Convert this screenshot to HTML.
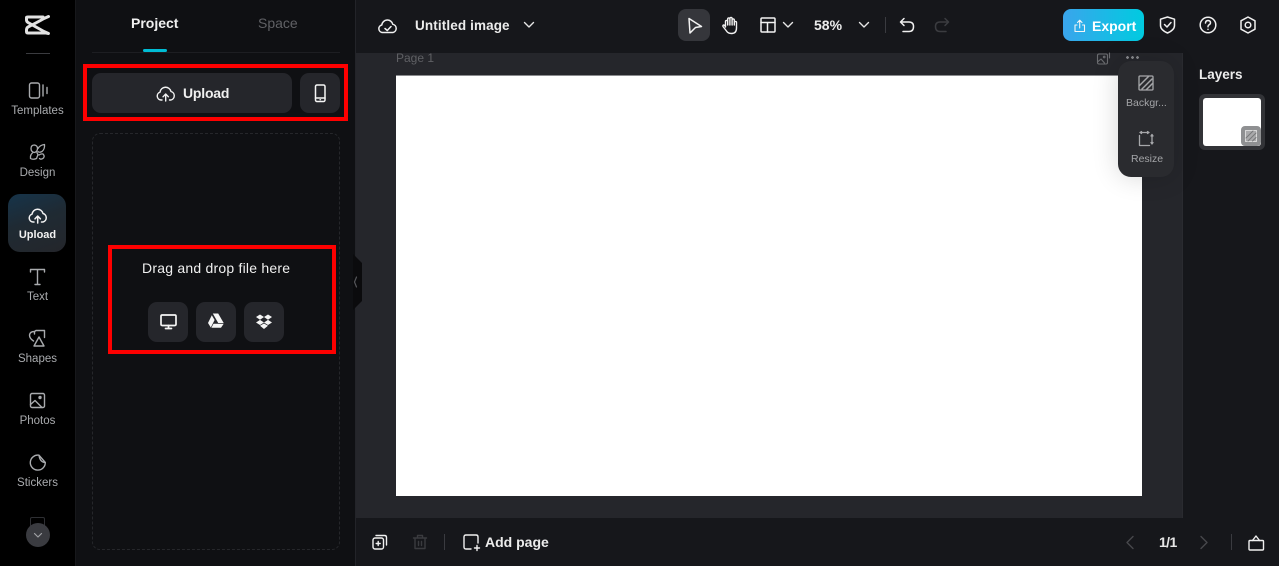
<!DOCTYPE html>
<html lang="en">
<head>
<meta charset="utf-8">
<title>Untitled image</title>
<style>
*{box-sizing:border-box;margin:0;padding:0}
html,body{width:1279px;height:566px;overflow:hidden;background:#0f1013;font-family:"Liberation Sans",sans-serif}
.a{position:absolute}
.t{position:absolute;white-space:nowrap;line-height:16px}
svg{position:absolute;overflow:visible;fill:none;stroke-linecap:round;stroke-linejoin:round}
.nav{position:absolute;left:0;width:75px;text-align:center;font-size:11.5px;line-height:14px;color:#a9abae;white-space:nowrap}
.b{background:#25262b;border-radius:9px;position:absolute}
</style>
</head>
<body>
<!-- backgrounds -->
<div class="a" style="left:0;top:0;width:75px;height:566px;background:#000"></div>
<div class="a" style="left:75px;top:0;width:281px;height:566px;background:#0f1013;border-left:1px solid #17181b;border-right:1px solid #232429"></div>
<div class="a" style="left:356px;top:0;width:923px;height:53px;background:#16171b"></div>
<div class="a" style="left:356px;top:53px;width:827px;height:465px;background:#25262b"></div>
<div class="a" style="left:1182px;top:53px;width:97px;height:465px;background:#16171b;border-left:1px solid #2a2b30"></div>
<div class="a" style="left:356px;top:518px;width:923px;height:48px;background:#16171b"></div>

<!-- rail -->
<svg style="left:24px;top:14px" width="27" height="22" viewBox="0 0 27 22" stroke="#e2e2e2" stroke-width="3"><path d="M24.500 2.500L20 4.500Q13 8.500 4 13Q2.500 14 2.500 16V17.500Q2.500 19 4 19H22L24.500 19.500L20 17.500Q12 13 4 8.500Q2.500 7.500 2.500 6V3.500Q2.500 3 4 3H19"/></svg>
<div class="a" style="left:26px;top:53px;width:24px;height:1px;background:#3a3b3f"></div>

<svg style="left:28px;top:81px" width="20" height="18" stroke="#a9abae" stroke-width="1.400"><rect x="1.500" y="2" width="10" height="15" rx="2"/><path d="M15 4V15M19 6.500V12.500"/></svg>
<div class="nav" style="top:104px">Templates</div>
<svg style="left:28px;top:143px" width="20" height="18" stroke="#a9abae" stroke-width="1.300"><path d="M3 5.500Q3 2 6.500 2Q9.500 2.500 9.500 5.500Q9.500 8.500 6.500 9.500Q3 9 3 5.500ZM10 5.500Q12 2 16.500 1.500Q17 6 14 8.500Q11 10 10 8.500M9 9.500Q9 10.500 10 11.500L8.500 15.500Q5 17 2.500 15.500Q2 11.500 5 9.500M11 12Q13 10.500 15 11Q17 13 15.500 15Q13 17 11.500 15.500"/></svg>
<div class="nav" style="top:166px">Design</div>

<div class="a" style="left:8px;top:194px;width:58px;height:58px;border-radius:12px;background:linear-gradient(160deg,#16344a 0%,#1f2a33 45%,#24262b 100%)"></div>
<svg style="left:28px;top:206px" width="20" height="18" stroke="#f2f2f2" stroke-width="1.500"><path d="M6 16H5A4 4 0 0 1 4 8.200A5.600 5.600 0 0 1 15 7.500A4.400 4.400 0 0 1 15 16H13.500M9.700 17V10.500M7 12.800L9.700 10L12.400 12.800"/></svg>
<div class="nav" style="top:228px;color:#f2f2f2;font-weight:bold;font-size:11px">Upload</div>

<svg style="left:29px;top:268px" width="18" height="18" stroke="#a9abae" stroke-width="1.400"><path d="M1.500 4V1.500H15.500V4M8.500 1.500V16.500M6 16.500H11"/></svg>
<div class="nav" style="top:290px">Text</div>
<svg style="left:28px;top:329px" width="20" height="19" stroke="#a9abae" stroke-width="1.400"><path d="M5.500 12Q1.500 9.500 1.500 6Q2 2.500 6.500 2.500L8 1.500H16.500V8.500M6.500 2.500V5M11 8L6 17H16Z"/></svg>
<div class="nav" style="top:352px">Shapes</div>
<svg style="left:29px;top:392px" width="18" height="18" stroke="#a9abae" stroke-width="1.400"><rect x="1.500" y="1.500" width="14" height="14" rx="1.500"/><path d="M1.500 12.500L6 8.500L13 15.500"/><circle cx="11" cy="5.500" r="1" fill="#a9abae"/></svg>
<div class="nav" style="top:414px">Photos</div>
<svg style="left:28px;top:453px" width="20" height="18" stroke="#a9abae" stroke-width="1.400"><path d="M11 2.200A7.500 7.500 0 1 0 17.300 9.500Q12 9.500 11 2.200ZM11 2.200L17.300 9.500"/></svg>
<div class="nav" style="top:476px">Stickers</div>
<div class="a" style="left:30px;top:517px;width:15px;height:12px;border:1.500px solid #2e2f33;border-radius:2px"></div>
<div class="a" style="left:26px;top:523px;width:24px;height:24px;border-radius:50%;background:#3a3b40"></div>
<svg style="left:26px;top:523px" width="24" height="24" stroke="#a0a1a4" stroke-width="1.200"><path d="M8.500 10.500L12 14L15.500 10.500"/></svg>

<!-- panel -->
<div class="t" style="left:131px;top:15px;font-size:14px;font-weight:bold;color:#f0f0f0">Project</div>
<div class="t" style="left:258px;top:15px;font-size:14px;color:#606165">Space</div>
<div class="a" style="left:92px;top:52px;width:248px;height:1px;background:#1d1e22"></div>
<div class="a" style="left:143px;top:49px;width:24px;height:3px;background:#00bcd4;border-radius:2px"></div>

<div class="a" style="left:83px;top:64px;width:265px;height:57px;border:4px solid #fe0000"></div>
<div class="b" style="left:92px;top:73px;width:200px;height:40px"></div>
<div class="b" style="left:300px;top:73px;width:40px;height:40px"></div>
<svg style="left:156px;top:84px" width="20" height="18" stroke="#f2f2f2" stroke-width="1.400"><path d="M6 16H5A4 4 0 0 1 4 8.200A5.600 5.600 0 0 1 15 7.500A4.400 4.400 0 0 1 15 16H13.500M9.700 17V10.500M7 12.800L9.700 10L12.400 12.800"/></svg>
<div class="t" style="left:183px;top:85px;font-size:14px;font-weight:bold;color:#f0f0f0;letter-spacing:-.2px">Upload</div>
<svg style="left:314px;top:84px" width="13" height="18" stroke="#f5f5f5" stroke-width="1.500"><rect x="1.500" y="1" width="9.500" height="16.500" rx="1.500"/><path d="M1.500 14H11" /><path d="M6 15.700H6.500" stroke-width="1.200"/></svg>

<div class="a" style="left:92px;top:133px;width:248px;height:417px;border:1px dashed #26272b;border-radius:8px"></div>

<div class="a" style="left:108px;top:245px;width:228px;height:109px;border:4px solid #fe0000"></div>
<div class="t" style="left:142px;top:260px;font-size:14px;color:#f0f0f0;letter-spacing:.22px">Drag and drop file here</div>
<div class="b" style="left:148px;top:302px;width:40px;height:40px"></div>
<div class="b" style="left:196px;top:302px;width:40px;height:40px"></div>
<div class="b" style="left:244px;top:302px;width:40px;height:40px"></div>
<svg style="left:160px;top:314px" width="17" height="16" stroke="#f5f5f5" stroke-width="1.700"><rect x="1" y="1" width="15" height="10.500" rx="1.200"/><path d="M5.500 14.500H11.500M8.500 11.500V14.500"/></svg>
<svg style="left:207px;top:313px" width="18" height="16"><path fill="#f5f5f5" d="M5.800 .5H11.200L16.700 10H11.200ZM4.800 2.200L7.600 7L3.800 14.500L1 10ZM6.500 10.800H16.700L14 14.800H4.400Z"/></svg>
<svg style="left:255px;top:314px" width="18" height="16"><path fill="#f5f5f5" d="M5 .5L9 3L5 5.700L1 3ZM13 .5L17 3L13 5.700L9 3ZM5 5.900L9 8.500L5 11L1 8.500ZM13 5.900L17 8.500L13 11L9 8.500ZM5 11.800L9 9.500L13 11.800L9 15Z"/></svg>

<svg style="left:349px;top:254px" width="14" height="56"><path fill="#0b0b0d" d="M4 0L13 9V47L4 56Z"/><path d="M7.500 23L5.500 28L7.500 33" stroke="#55565a" stroke-width="1.200"/></svg>

<!-- top bar -->
<svg style="left:378px;top:17px" width="20" height="17" stroke="#f0f0f0" stroke-width="1.500"><path d="M5 15.500H4.500A3.800 3.800 0 0 1 3.800 8A5.600 5.600 0 0 1 14.800 7.300A4.200 4.200 0 0 1 15 15.500ZM7 11.500L9.300 13.500L13 9.500"/></svg>
<div class="t" style="left:415px;top:18px;font-size:13.500px;font-weight:bold;color:#ececec;letter-spacing:.12px">Untitled image</div>
<svg style="left:523px;top:20px" width="12" height="10" stroke="#e6e6e6" stroke-width="1.400"><path d="M1.500 2.500L6 7L10.500 2.500"/></svg>

<div class="a" style="left:678px;top:9px;width:32px;height:32px;border-radius:8px;background:#35363b"></div>
<svg style="left:687px;top:17px" width="16" height="17" stroke="#f2f2f2" stroke-width="1.500"><path d="M2 1.500L14.500 9.500L8.500 10.500L3 16Z"/></svg>
<svg style="left:721px;top:16px" width="18" height="19" stroke="#f2f2f2" stroke-width="1.400"><path d="M4.500 11V5.500A1.100 1.100 0 0 1 6.700 5.500V9M6.700 8V3A1.100 1.100 0 0 1 8.900 3V9M8.900 8V2.500A1.100 1.100 0 0 1 11.100 2.500V9M11.100 9V4A1.100 1.100 0 0 1 13.300 4V9M13.300 6.500A1.100 1.100 0 0 1 15.500 6.500V12Q15.500 17.500 10.500 17.500Q7 17.500 5.500 15L2 10.500Q1.500 9 3 9L4.500 10.500"/></svg>
<svg style="left:760px;top:17px" width="16" height="16" stroke="#f2f2f2" stroke-width="1.500"><rect x="1" y="1" width="14" height="14" rx="1"/><path d="M1 5.500H15M7.500 5.500V15"/></svg>
<svg style="left:782px;top:20px" width="12" height="10" stroke="#e6e6e6" stroke-width="1.400"><path d="M1.500 2.500L6 7L10.500 2.500"/></svg>
<div class="t" style="left:814px;top:17px;font-size:14px;font-weight:bold;color:#ececec">58%</div>
<svg style="left:858px;top:20px" width="12" height="10" stroke="#e6e6e6" stroke-width="1.400"><path d="M1.500 2.500L6 7L10.500 2.500"/></svg>
<div class="a" style="left:885px;top:17px;width:1px;height:16px;background:#3a3b40"></div>
<svg style="left:899px;top:17px" width="16" height="16" stroke="#f0f0f0" stroke-width="1.500"><path d="M5 1.500L1.500 5L5 8.500M1.500 5H10Q14.500 5 14.500 9.500Q14.500 14.500 10 14.500H4"/></svg>
<svg style="left:934px;top:17px" width="16" height="16" stroke="#3b3c40" stroke-width="1.500"><path d="M11 1.500L14.500 5L11 8.500M14.500 5H6Q1.500 5 1.500 9.500Q1.500 14.500 6 14.500H12"/></svg>

<div class="a" style="left:1063px;top:9px;width:81px;height:32px;border-radius:8px;background:linear-gradient(90deg,#3aa5ec,#00cbe0)"></div>
<svg style="left:1073px;top:18px" width="14" height="15" stroke="#f5f5f5" stroke-width="1.100"><path d="M4 7H2V13.500H11.500V7H9.500M6.700 10V2.500M4.500 4.500L6.700 2.200L9 4.500"/></svg>
<div class="t" style="left:1092px;top:18px;font-size:14px;font-weight:bold;color:#fff">Export</div>
<svg style="left:1159px;top:16px" width="18" height="18" stroke="#f0f0f0" stroke-width="1.500"><path d="M8.500 1L15.500 3.200V9.500Q15.500 14 8.500 17Q1.500 14 1.500 9.500V3.200ZM5.500 8.500L8 11L12 6.500"/></svg>
<svg style="left:1199px;top:16px" width="18" height="18" stroke="#f0f0f0" stroke-width="1.500"><circle cx="9" cy="9" r="7.800"/><path d="M6.500 7Q6.700 4.500 9 4.500Q11.500 4.600 11.500 6.800Q11.500 8.200 9.800 9Q9 9.500 9 10.700M9 13.200V13.400"/></svg>
<svg style="left:1240px;top:16px" width="16" height="18" stroke="#f0f0f0" stroke-width="1.500"><path d="M8 1L15 4.800V13.200L8 17L1 13.200V4.800Z"/><circle cx="8" cy="9" r="2.800"/></svg>

<!-- canvas -->
<div class="t" style="left:396px;top:50px;font-size:12px;color:#5f6064">Page 1</div>
<svg style="left:1097px;top:52px" width="14" height="13" stroke="#6b6c70" stroke-width="1.100"><rect x=".5" y="2" width="10" height="10" rx="1.500"/><path d="M.5 10L4 7L7.500 11M12.500 1V6"/><circle cx="7.200" cy="5" r=".8"/></svg>
<div class="a" style="left:1126px;top:56px;width:13px;height:3px;background:radial-gradient(circle at 1.500px 1.500px,#85868a 1.300px,transparent 1.500px) 0 0/5px 3px repeat-x"></div>
<div class="a" style="left:396px;top:76px;width:746px;height:420px;background:#fff;box-shadow:0 -1px 0 #8a8b8e"></div>
<div class="a" style="left:1118px;top:61px;width:56px;height:116px;border-radius:13px;background:#2a2b2f;box-shadow:0 0 26px rgba(0,0,0,.16)"></div>
<svg style="left:1138px;top:75px" width="16" height="16" stroke="#a6a7aa" stroke-width="1.300"><rect x="1" y="1" width="14" height="14" rx="1"/><path d="M1.500 10.500L10.500 1.500M4 14L14 4M8.500 14.500L14.500 8.500" stroke-width="1.500"/></svg>
<div class="t" style="left:1126px;top:95px;font-size:10.500px;color:#a3a4a7">Backgr...</div>
<svg style="left:1138px;top:131px" width="16" height="16" stroke="#a6a7aa" stroke-width="1.300"><path d="M1.500 4.500V14.500H11.500M2 1.500H11M3.500 .5L2 1.500L3.500 2.500M9.500 .5L11 1.500L9.500 2.500M14 3.500V13M13 5L14 3.500L15 5M13 11.500L14 13L15 11.500"/></svg>
<div class="t" style="left:1131px;top:151px;font-size:10.500px;color:#a3a4a7">Resize</div>

<!-- layers -->
<div class="t" style="left:1199px;top:67px;font-size:13.500px;font-weight:bold;color:#ececec">Layers</div>
<div class="a" style="left:1199px;top:94px;width:66px;height:56px;border-radius:6px;background:#323337"></div>
<div class="a" style="left:1203px;top:98px;width:58px;height:48px;border-radius:3px;background:#fff"></div>
<div class="a" style="left:1241px;top:126px;width:20px;height:20px;border-radius:4px;background:#8f9092"></div>
<svg style="left:1245px;top:130px" width="12" height="12" stroke="#d8d8d8" stroke-width="1"><rect x=".5" y=".5" width="11" height="11" fill="#a9a9ab"/><path d="M1 8L8 1M3 11L11 3M7.500 11L11 7.500" stroke="#77787a"/></svg>

<!-- bottom bar -->
<svg style="left:372px;top:534px" width="16" height="16" stroke="#f0f0f0" stroke-width="1.400"><rect x="1" y="4" width="10.500" height="11" rx="2"/><path d="M4 1.500H12.500Q14.500 1.500 14.500 3.500V11M6.200 7.500V11.500M4.200 9.500H8.200"/></svg>
<svg style="left:412px;top:534px" width="16" height="16" stroke="#3a3b3f" stroke-width="1.400"><path d="M1.500 4H14.500M5.500 4V1.500H10.500V4M3 4V14.500H13V4M6.500 7.500V11.500M9.500 7.500V11.500"/></svg>
<div class="a" style="left:444px;top:534px;width:1px;height:16px;background:#3a3b40"></div>
<svg style="left:463px;top:534px" width="18" height="17" stroke="#f0f0f0" stroke-width="1.400"><path d="M8 15H3Q1 15 1 13V3Q1 1 3 1H13Q15 1 15 3V9M14 11.500V16.500M11.500 14H16.500"/></svg>
<div class="t" style="left:485px;top:534px;font-size:14px;font-weight:bold;color:#ececec">Add page</div>
<svg style="left:1125px;top:535px" width="10" height="15" stroke="#47484c" stroke-width="1.400"><path d="M8 1.500L2 7.500L8 13.500"/></svg>
<div class="t" style="left:1159px;top:534px;font-size:14px;font-weight:bold;color:#e6e6e6;letter-spacing:-.6px">1/1</div>
<svg style="left:1199px;top:535px" width="10" height="15" stroke="#47484c" stroke-width="1.400"><path d="M2 1.500L8 7.500L2 13.500"/></svg>
<div class="a" style="left:1231px;top:534px;width:1px;height:16px;background:#3a3b40"></div>
<svg style="left:1248px;top:534px" width="16" height="17" stroke="#f0f0f0" stroke-width="1.400"><rect x="1" y="6.500" width="14.500" height="9.500" rx="1"/><path d="M4.500 6.500L8 2L11.500 6.500"/></svg>
</body>
</html>
